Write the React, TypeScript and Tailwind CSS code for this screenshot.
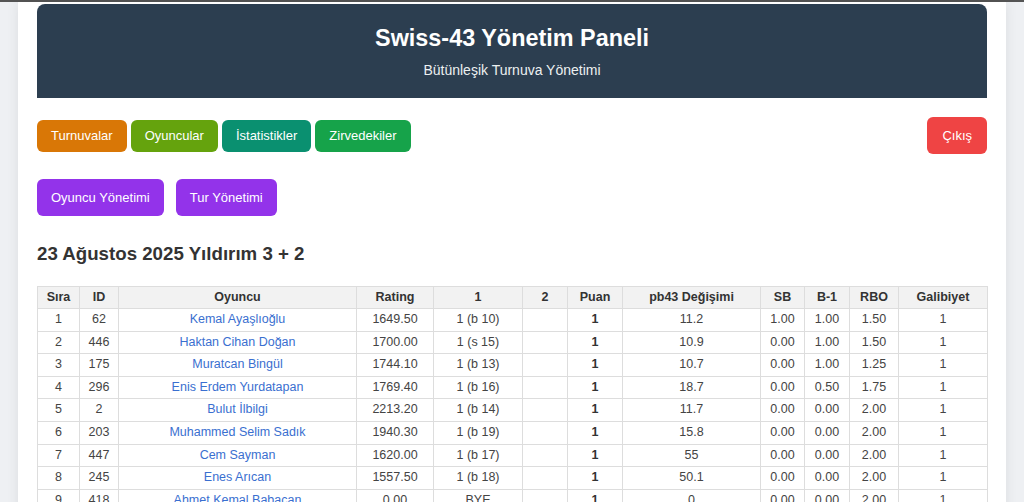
const rows = [
  ['1', '62', 'Kemal Ayaşlıoğlu', '1649.50', '1 (b 10)', '11.2', '1.00', '1.00', '1.50'],
  ['2', '446', 'Haktan Cihan Doğan', '1700.00', '1 (s 15)', '10.9', '0.00', '1.00', '1.50'],
  ['3', '175', 'Muratcan Bingül', '1744.10', '1 (b 13)', '10.7', '0.00', '1.00', '1.25'],
  ['4', '296', 'Enis Erdem Yurdatapan', '1769.40', '1 (b 16)', '18.7', '0.00', '0.50', '1.75'],
  ['5', '2', 'Bulut İlbilgi', '2213.20', '1 (b 14)', '11.7', '0.00', '0.00', '2.00'],
  ['6', '203', 'Muhammed Selim Sadık', '1940.30', '1 (b 19)', '15.8', '0.00', '0.00', '2.00'],
  ['7', '447', 'Cem Sayman', '1620.00', '1 (b 17)', '55', '0.00', '0.00', '2.00'],
  ['8', '245', 'Enes Arıcan', '1557.50', '1 (b 18)', '50.1', '0.00', '0.00', '2.00'],
  ['9', '418', 'Ahmet Kemal Babacan', '0.00', 'BYE', '0', '0.00', '0.00', '2.00'],
];

const headers = [
  { label: 'Sıra', w: 'w-[42px]' },
  { label: 'ID', w: 'w-[39px]' },
  { label: 'Oyuncu', w: 'w-[238px]' },
  { label: 'Rating', w: 'w-[77px]' },
  { label: '1', w: 'w-[89px]' },
  { label: '2', w: 'w-[45px]' },
  { label: 'Puan', w: 'w-[55px]' },
  { label: 'pb43 Değişimi', w: 'w-[138px]' },
  { label: 'SB', w: 'w-[44px]' },
  { label: 'B-1', w: 'w-[45px]' },
  { label: 'RBO', w: 'w-[49px]' },
  { label: 'Galibiyet', w: 'w-[89px]' },
];

const td = 'border border-[#ddd] px-1 py-1 text-center leading-[13.6px]';

export default function App() {
  return (
    <div className="min-h-screen bg-[#eef0f3] font-['Liberation_Sans',Arial,sans-serif]">
      <div className="h-[2px] bg-[#555]" />
      <div className="mx-auto w-[988px] bg-white px-[19px] pt-[2px] pb-6 shadow-[0_0_12px_rgba(0,0,0,0.08)]">
        <header className="rounded-t-lg bg-[#2c3e50] py-5 text-center text-white">
          <h1 className="text-[23.4px] font-bold leading-[28px]">Swiss-43 Yönetim Paneli</h1>
          <p className="mt-[10px] text-[14px] leading-[16px] text-[#ecf0f1]">Bütünleşik Turnuva Yönetimi</p>
        </header>

        <nav className="mt-[19px] flex items-center justify-between">
          <div className="flex gap-1">
            <button className="h-8 rounded-md bg-[#d97706] px-[14px] text-[13px] text-white">Turnuvalar</button>
            <button className="h-8 rounded-md bg-[#65a30d] px-[14px] text-[13px] text-white">Oyuncular</button>
            <button className="h-8 rounded-md bg-[#0a9070] px-[14px] text-[13px] text-white">İstatistikler</button>
            <button className="h-8 rounded-md bg-[#16a34a] px-[14px] text-[13px] text-white">Zirvedekiler</button>
          </div>
          <button className="h-[37px] rounded-md bg-[#ef4444] px-[15px] text-[13px] text-white">Çıkış</button>
        </nav>

        <div className="mt-[25px] flex gap-3">
          <button className="h-[37px] rounded-md bg-[#9333ea] px-[14px] text-[13px] text-white">Oyuncu Yönetimi</button>
          <button className="h-[37px] rounded-md bg-[#9333ea] px-[14px] text-[13px] text-white">Tur Yönetimi</button>
        </div>

        <h2 className="mt-[27px] text-[18.7px] font-bold leading-[21.5px] text-[#333]">23 Ağustos 2025 Yıldırım 3 + 2</h2>

        <table className="mt-[21px] w-full table-fixed border-collapse text-[12.5px] text-[#444]">
          <thead>
            <tr className="bg-[#f2f2f2]">
              {headers.map((h) => (
                <th key={h.label} className={`${h.w} ${td} font-bold text-[#333]`}>
                  {h.label}
                </th>
              ))}
            </tr>
          </thead>
          <tbody>
            {rows.map((r) => (
              <tr key={r[0]}>
                <td className={td}>{r[0]}</td>
                <td className={td}>{r[1]}</td>
                <td className={td}>
                  <a className="text-[#3a6fd0]" href="#">{r[2]}</a>
                </td>
                <td className={td}>{r[3]}</td>
                <td className={td}>{r[4]}</td>
                <td className={td}></td>
                <td className={`${td} font-bold text-[#333]`}>1</td>
                <td className={td}>{r[5]}</td>
                <td className={td}>{r[6]}</td>
                <td className={td}>{r[7]}</td>
                <td className={td}>{r[8]}</td>
                <td className={td}>1</td>
              </tr>
            ))}
          </tbody>
        </table>
      </div>
    </div>
  );
}
